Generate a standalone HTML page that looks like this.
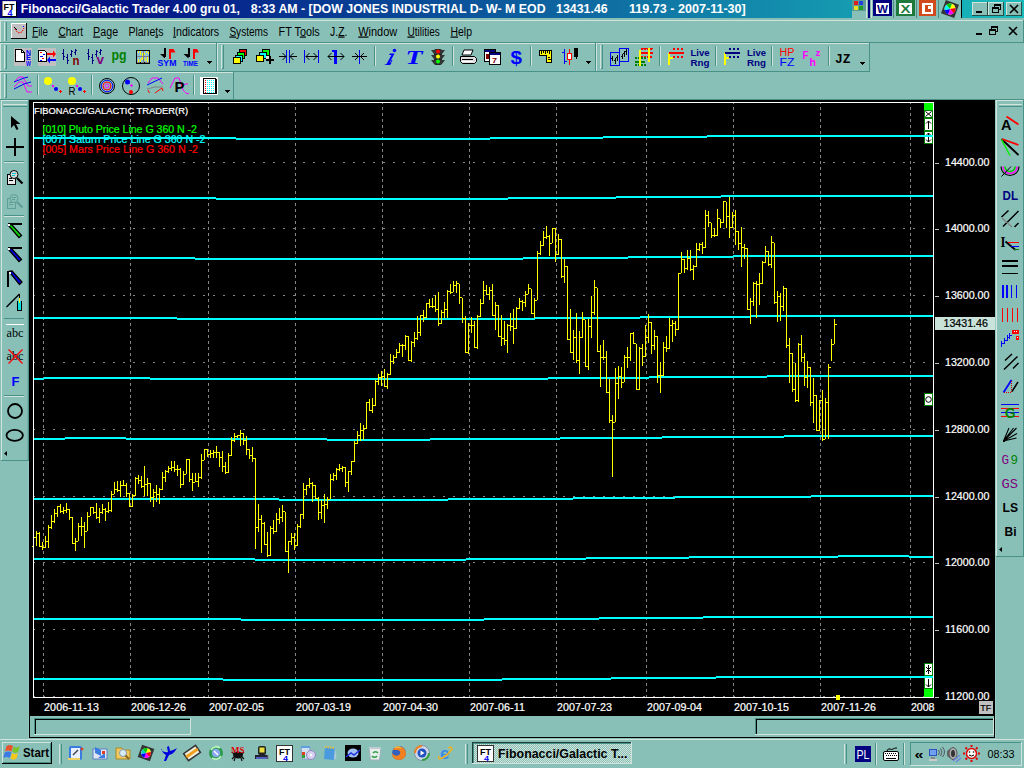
<!DOCTYPE html><html><head><meta charset="utf-8"><title>Fibonacci/Galactic Trader</title><style>
html,body{margin:0;padding:0}
body{width:1024px;height:768px;overflow:hidden;background:#88c0b8;position:relative;font-family:"Liberation Sans",sans-serif;font-size:12px;color:#000}
.abs{position:absolute}
svg{position:absolute;left:0;top:0;overflow:visible}
svg text{font-family:"Liberation Sans",sans-serif;white-space:pre}
</style></head><body>
<div id="titlebar" class="abs" style="left:0;top:0;width:1024px;height:18px;background:linear-gradient(90deg,#000080 0,#000080 18px,#19bbbb 1024px)"></div>
<svg width="1024" height="43" viewBox="0 0 1024 43" shape-rendering="crispEdges">
<rect x="2" y="1" width="14" height="15" fill="#fff" /><rect x="2" y="1" width="14" height="1" fill="#ddd" /><rect x="16" y="2" width="1" height="15" fill="#000" /><rect x="3" y="16" width="14" height="1" fill="#000" /><rect x="2" y="1" width="1" height="15" fill="#888" />
<text x="3.5" y="10" font-size="9.5" fill="#000" font-weight="bold" textLength="11" lengthAdjust="spacingAndGlyphs" shape-rendering="auto">FT</text>
<text x="7.5" y="16" font-size="8.5" fill="#0000ff" font-weight="bold" textLength="5" lengthAdjust="spacingAndGlyphs" >4</text>
<text x="20.8" y="13" font-size="12.6" fill="#fff" font-weight="bold" textLength="219.2" lengthAdjust="spacingAndGlyphs" >Fibonacci/Galactic Trader 4.00 gru 01,</text>
<text x="250.7" y="13" font-size="12.6" fill="#fff" font-weight="bold" textLength="294.9" lengthAdjust="spacingAndGlyphs" >8:33 AM - [DOW JONES INDUSTRIAL D- W- M EOD</text>
<text x="556" y="13" font-size="12.6" fill="#fff" font-weight="bold" textLength="51.7" lengthAdjust="spacingAndGlyphs" >13431.46</text>
<text x="629" y="13" font-size="12.6" fill="#fff" font-weight="bold" textLength="116.8" lengthAdjust="spacingAndGlyphs" >119.73 - 2007-11-30]</text>
<rect x="852" y="0" width="110" height="18" fill="#88c0b8" />
<rect x="852" y="0" width="14" height="11" fill="#5d9b94" />
<rect x="854" y="1" width="4" height="4" fill="#e02020" /><rect x="859" y="1" width="4" height="4" fill="#2040e0" /><rect x="854" y="6" width="4" height="4" fill="#e8e020" /><rect x="859" y="6" width="4" height="4" fill="#20a020" />
<rect x="866" y="0" width="1" height="18" fill="#d0e4dc" /><rect x="868" y="0" width="2" height="18" fill="#000080" /><rect x="871" y="0" width="1" height="18" fill="#d0e4dc" />
<rect x="873" y="0" width="19" height="16" fill="#000080" /><rect x="876" y="3" width="13" height="11" fill="#fff" /><text x="877" y="13" font-size="11" fill="#000080" font-weight="bold" textLength="11" lengthAdjust="spacingAndGlyphs" >W</text>
<rect x="893" y="0" width="1" height="18" fill="#489088" />
<rect x="896" y="0" width="19" height="16" fill="#1e7a3c" /><rect x="899" y="3" width="13" height="11" fill="#fff" /><text x="900.5" y="13" font-size="11" fill="#1e7a3c" font-weight="bold" textLength="10" lengthAdjust="spacingAndGlyphs" >X</text>
<rect x="916" y="0" width="1" height="18" fill="#489088" />
<rect x="919" y="0" width="17" height="16" fill="#d04a1c" /><rect x="922" y="3" width="11" height="11" fill="#fff" /><rect x="925" y="5" width="6" height="7" fill="#d04a1c" /><rect x="928" y="6" width="3" height="3" fill="#fff" />
<rect x="938" y="0" width="1" height="18" fill="#489088" />
<g transform="rotate(20 950 9)" shape-rendering="auto"><rect x="943" y="2" width="14" height="14" fill="#333"/><circle cx="950" cy="9" r="5.5" fill="#e8e8e8"/><path d="M950 9L950 3.5A5.5 5.5 0 0 1 954.8 6.2z" fill="#ff0"/><path d="M950 9L954.8 6.2A5.5 5.5 0 0 1 954.8 11.8z" fill="#f00"/><path d="M950 9L954.8 11.8A5.5 5.5 0 0 1 950 14.5z" fill="#f0f"/><path d="M950 9L950 14.5A5.5 5.5 0 0 1 945.2 11.8z" fill="#00f"/><path d="M950 9L945.2 11.8A5.5 5.5 0 0 1 945.2 6.2z" fill="#0ff"/><path d="M950 9L945.2 6.2A5.5 5.5 0 0 1 950 3.5z" fill="#0c0"/></g>
<rect x="961" y="0" width="1" height="18" fill="#000" />
<rect x="972" y="2" width="16" height="14" fill="#88c0b8" /><rect x="972" y="2" width="16" height="1" fill="#d0e4dc" /><rect x="972" y="2" width="1" height="14" fill="#d0e4dc" /><rect x="972" y="15" width="16" height="1" fill="#27504a" /><rect x="987" y="2" width="1" height="14" fill="#27504a" />
<rect x="988" y="2" width="16" height="14" fill="#88c0b8" /><rect x="988" y="2" width="16" height="1" fill="#d0e4dc" /><rect x="988" y="2" width="1" height="14" fill="#d0e4dc" /><rect x="988" y="15" width="16" height="1" fill="#27504a" /><rect x="1003" y="2" width="1" height="14" fill="#27504a" />
<rect x="1006" y="2" width="16" height="14" fill="#88c0b8" /><rect x="1006" y="2" width="16" height="1" fill="#d0e4dc" /><rect x="1006" y="2" width="1" height="14" fill="#d0e4dc" /><rect x="1006" y="15" width="16" height="1" fill="#27504a" /><rect x="1021" y="2" width="1" height="14" fill="#27504a" />
<rect x="976" y="11" width="6" height="2" fill="#000" />
<path d="M994.5 4.5h6v5h-6zM992.5 7.5h6v5h-6z" stroke="#000" fill="none"/><rect x="994" y="4" width="7" height="2" fill="#000" /><rect x="992" y="7" width="7" height="2" fill="#000" /><rect x="993" y="9" width="5" height="3" fill="#88c0b8" />
<path d="M1010 5l8 8M1018 5l-8 8" stroke="#000" stroke-width="1.6" shape-rendering="auto"/>
<rect x="0" y="20" width="1024" height="1" fill="#d0e4dc" /><rect x="0" y="20" width="1" height="80" fill="#d0e4dc" />
<rect x="0" y="42" width="1024" height="1" fill="#489088" /><rect x="1023" y="20" width="1" height="23" fill="#489088" />
<rect x="4" y="22" width="1" height="19" fill="#d0e4dc" /><rect x="5" y="22" width="1" height="19" fill="#88c0b8" /><rect x="6" y="22" width="1" height="19" fill="#489088" />
<rect x="11" y="23" width="16" height="16" fill="#c0c0c0" /><rect x="11" y="23" width="16" height="1" fill="#fff" /><rect x="11" y="23" width="1" height="16" fill="#fff" /><rect x="11" y="38" width="16" height="1" fill="#000" /><rect x="26" y="23" width="1" height="16" fill="#000" />
<path d="M14 27l3 3" stroke="#000" shape-rendering="auto"/><path d="M15 29l3 4l4-1l2-4" stroke="#e00" fill="none" stroke-dasharray="1.5 1" shape-rendering="auto"/><rect x="23" y="26" width="1" height="1" fill="#00f" />
<text x="32.2" y="35.5" font-size="12" textLength="15.8" lengthAdjust="spacingAndGlyphs" shape-rendering="auto"><tspan text-decoration="underline">F</tspan>ile</text>
<text x="58.4" y="35.5" font-size="12" textLength="24.7" lengthAdjust="spacingAndGlyphs" shape-rendering="auto"><tspan text-decoration="underline">C</tspan>hart</text>
<text x="93.1" y="35.5" font-size="12" textLength="25.0" lengthAdjust="spacingAndGlyphs" shape-rendering="auto"><tspan text-decoration="underline">P</tspan>age</text>
<text x="128.4" y="35.5" font-size="12" textLength="35.0" lengthAdjust="spacingAndGlyphs" shape-rendering="auto">Plane<tspan text-decoration="underline">t</tspan>s</text>
<text x="173.1" y="35.5" font-size="12" textLength="46.1" lengthAdjust="spacingAndGlyphs" shape-rendering="auto"><tspan text-decoration="underline">I</tspan>ndicators</text>
<text x="229.4" y="35.5" font-size="12" textLength="38.6" lengthAdjust="spacingAndGlyphs" shape-rendering="auto"><tspan text-decoration="underline">S</tspan>ystems</text>
<text x="278.6" y="35.5" font-size="12" textLength="41.2" lengthAdjust="spacingAndGlyphs" shape-rendering="auto">FT T<tspan text-decoration="underline">o</tspan>ols</text>
<text x="330.1" y="35.5" font-size="12" textLength="17.4" lengthAdjust="spacingAndGlyphs" shape-rendering="auto">J.<tspan text-decoration="underline">Z</tspan>.</text>
<text x="358.2" y="35.5" font-size="12" textLength="39.0" lengthAdjust="spacingAndGlyphs" shape-rendering="auto"><tspan text-decoration="underline">W</tspan>indow</text>
<text x="407.4" y="35.5" font-size="12" textLength="32.4" lengthAdjust="spacingAndGlyphs" shape-rendering="auto"><tspan text-decoration="underline">U</tspan>tilities</text>
<text x="450.5" y="35.5" font-size="12" textLength="21.5" lengthAdjust="spacingAndGlyphs" shape-rendering="auto"><tspan text-decoration="underline">H</tspan>elp</text>
<rect x="976" y="33" width="6" height="2" fill="#000" />
<path d="M991.5 26.5h6v5h-6zM989.5 29.5h6v5h-6z" stroke="#000" fill="none"/><rect x="991" y="26" width="7" height="2" fill="#000" /><rect x="989" y="29" width="7" height="2" fill="#000" /><rect x="990" y="31" width="5" height="3" fill="#88c0b8" />
<path d="M1009 27l8 8M1017 27l-8 8" stroke="#000" stroke-width="1.6" shape-rendering="auto"/>
</svg>
<svg width="1024" height="100" viewBox="0 0 1024 100" shape-rendering="crispEdges">
<rect x="0" y="43" width="217" height="1" fill="#d0e4dc" /><rect x="0" y="43" width="1" height="29" fill="#d0e4dc" /><rect x="0" y="71" width="217" height="1" fill="#489088" /><rect x="216" y="43" width="1" height="29" fill="#489088" /><rect x="217" y="43" width="379" height="1" fill="#d0e4dc" /><rect x="217" y="43" width="1" height="29" fill="#d0e4dc" /><rect x="217" y="71" width="379" height="1" fill="#489088" /><rect x="595" y="43" width="1" height="29" fill="#489088" /><rect x="596" y="43" width="274" height="1" fill="#d0e4dc" /><rect x="596" y="43" width="1" height="29" fill="#d0e4dc" /><rect x="596" y="71" width="274" height="1" fill="#489088" /><rect x="869" y="43" width="1" height="29" fill="#489088" /><rect x="0" y="72" width="234" height="1" fill="#d0e4dc" /><rect x="0" y="72" width="1" height="28" fill="#d0e4dc" /><rect x="0" y="99" width="234" height="1" fill="#489088" /><rect x="233" y="72" width="1" height="28" fill="#489088" />
<rect x="234" y="99" width="790" height="1" fill="#489088" />
<rect x="4" y="45" width="1" height="24" fill="#d0e4dc" /><rect x="5" y="45" width="1" height="24" fill="#88c0b8" /><rect x="6" y="45" width="1" height="24" fill="#489088" /><rect x="5" y="68" width="1" height="1" fill="#489088" />
<rect x="221" y="45" width="1" height="24" fill="#d0e4dc" /><rect x="222" y="45" width="1" height="24" fill="#88c0b8" /><rect x="223" y="45" width="1" height="24" fill="#489088" /><rect x="222" y="68" width="1" height="1" fill="#489088" />
<rect x="600" y="45" width="1" height="24" fill="#d0e4dc" /><rect x="601" y="45" width="1" height="24" fill="#88c0b8" /><rect x="602" y="45" width="1" height="24" fill="#489088" /><rect x="601" y="68" width="1" height="1" fill="#489088" />
<rect x="4" y="74" width="1" height="24" fill="#d0e4dc" /><rect x="5" y="74" width="1" height="24" fill="#88c0b8" /><rect x="6" y="74" width="1" height="24" fill="#489088" /><rect x="5" y="97" width="1" height="1" fill="#489088" />
<rect x="14" y="48" width="18" height="18" fill="#c0c0c0" />
<path d="M15.5 49.5h6l3 3v9h-9z" fill="#fff" stroke="#000"/><path d="M21.5 49.5v3h3" fill="none" stroke="#000"/>
<text x="26" y="54.5" font-size="6.5" fill="#0000ff" font-weight="bold" textLength="5" lengthAdjust="spacingAndGlyphs" >N</text>
<text x="26" y="60.0" font-size="6.5" fill="#0000ff" font-weight="bold" textLength="5" lengthAdjust="spacingAndGlyphs" >E</text>
<text x="26" y="65.5" font-size="6.5" fill="#0000ff" font-weight="bold" textLength="5" lengthAdjust="spacingAndGlyphs" >W</text>
<rect x="38" y="48" width="18" height="18" fill="#c0c0c0" />
<path d="M38.5 50.5h6l2 2v9h-8z" fill="#fff" stroke="#000"/><rect x="40" y="52" width="2" height="1" fill="#f00" /><rect x="43" y="54" width="2" height="1" fill="#00f" /><rect x="40" y="56" width="3" height="1" fill="#00f" /><rect x="42" y="58" width="2" height="1" fill="#f00" /><rect x="40" y="60" width="2" height="1" fill="#00f" />
<path d="M47 53h6v-2.5l3 3.5l-3 3.5v-2.5h-6z" fill="#f00" shape-rendering="auto"/><path d="M56 59h-6v-2.5l-3 3.5l3 3.5v-2.5h6z" fill="#00f" shape-rendering="auto"/>
<rect x="63" y="49" width="1" height="11" fill="#000080" /><rect x="62" y="53" width="1" height="1" fill="#000080" /><rect x="64" y="56" width="1" height="1" fill="#000080" /><rect x="67" y="54" width="1" height="10" fill="#000080" /><rect x="66" y="57" width="1" height="1" fill="#000080" /><rect x="68" y="60" width="1" height="1" fill="#000080" /><rect x="71" y="50" width="1" height="7" fill="#000080" /><rect x="72" y="51" width="1" height="1" fill="#000080" /><rect x="70" y="54" width="1" height="1" fill="#000080" /><rect x="75" y="49" width="1" height="6" fill="#000080" /><rect x="76" y="50" width="1" height="1" fill="#000080" /><rect x="74" y="52" width="1" height="1" fill="#000080" /><text x="72.5" y="65" font-size="13" fill="#800000" font-weight="bold" textLength="7" lengthAdjust="spacingAndGlyphs" shape-rendering="auto">n</text>
<rect x="88" y="49" width="1" height="11" fill="#000080" /><rect x="87" y="53" width="1" height="1" fill="#000080" /><rect x="89" y="56" width="1" height="1" fill="#000080" /><rect x="92" y="54" width="1" height="10" fill="#000080" /><rect x="91" y="57" width="1" height="1" fill="#000080" /><rect x="93" y="60" width="1" height="1" fill="#000080" /><rect x="96" y="50" width="1" height="7" fill="#000080" /><rect x="97" y="51" width="1" height="1" fill="#000080" /><rect x="95" y="54" width="1" height="1" fill="#000080" /><rect x="100" y="49" width="1" height="6" fill="#000080" /><rect x="101" y="50" width="1" height="1" fill="#000080" /><rect x="99" y="52" width="1" height="1" fill="#000080" /><text x="96.5" y="64" font-size="13" fill="#800080" font-weight="bold" textLength="7.5" lengthAdjust="spacingAndGlyphs" shape-rendering="auto">v</text>
<text x="111.5" y="60" font-size="14" fill="#008000" font-weight="bold" textLength="15" lengthAdjust="spacingAndGlyphs" shape-rendering="auto">pg</text>
<rect x="136" y="50" width="14" height="14" fill="#000" /><rect x="137" y="51" width="12" height="12" fill="#8cc0d8" /><rect x="143" y="51" width="1" height="12" fill="#808080" /><rect x="137" y="56" width="12" height="1" fill="#808080" /><rect x="137" y="62" width="12" height="1" fill="#808080" /><rect x="140" y="62" width="1" height="1" fill="#000" /><rect x="144" y="62" width="1" height="1" fill="#000" />
<rect x="138" y="51" width="1" height="2" fill="#ffff00" />
<rect x="140" y="51" width="1" height="4" fill="#ffff00" />
<rect x="142" y="53" width="1" height="3" fill="#ffff00" />
<rect x="144" y="53" width="1" height="2" fill="#ffff00" />
<rect x="146" y="51" width="1" height="2" fill="#ffff00" />
<rect x="148" y="52" width="1" height="2" fill="#ffff00" />
<rect x="138" y="59" width="1" height="3" fill="#ffff00" />
<rect x="140" y="59" width="1" height="3" fill="#ffff00" />
<rect x="141" y="58" width="1" height="1" fill="#ffff00" />
<rect x="142" y="57" width="1" height="3" fill="#ffff00" />
<rect x="145" y="58" width="1" height="3" fill="#ffff00" />
<rect x="147" y="57" width="1" height="5" fill="#ffff00" />
<rect x="164" y="48" width="2" height="9" fill="#000" /><path d="M160 54l5 4.5V54z" fill="#000" shape-rendering="auto"/><rect x="169" y="49" width="2" height="10" fill="#f00" /><path d="M171 49h2.5l2 3.5h-4.5z" fill="#f00" shape-rendering="auto"/><text x="157.5" y="65.5" font-size="8.5" fill="#0000ff" font-weight="bold" textLength="19" lengthAdjust="spacingAndGlyphs" shape-rendering="auto">SYM</text>
<rect x="187.5" y="48" width="2" height="9" fill="#000" /><path d="M183.5 54l5 4.5V54z" fill="#000" shape-rendering="auto"/><rect x="192.5" y="49" width="2" height="10" fill="#f00" /><path d="M194.5 49h2.5l2 3.5h-4.5z" fill="#f00" shape-rendering="auto"/><text x="183" y="65.5" font-size="7.5" fill="#0000ff" font-weight="bold" textLength="15" lengthAdjust="spacingAndGlyphs" shape-rendering="auto">TIME</text>
<path d="M207 61h5l-2.5 3z" fill="#000"/>
<rect x="239" y="49" width="8" height="7" fill="#f00" /><path d="M239.5 49.5h7v6h-7z" fill="none" stroke="#000"/><rect x="237" y="52" width="8" height="7" fill="#0f0" /><path d="M237.5 52.5h7v6h-7z" fill="none" stroke="#000"/><rect x="235" y="55" width="8" height="7" fill="#0ff" /><path d="M235.5 55.5h7v6h-7z" fill="none" stroke="#000"/><rect x="233" y="57" width="8" height="7" fill="#ff0" /><path d="M233.5 57.5h7v6h-7z" fill="none" stroke="#000"/>
<rect x="262" y="49" width="8" height="7" fill="#0f0" /><path d="M262.5 49.5h7v6h-7z" fill="none" stroke="#000"/><rect x="259" y="52" width="8" height="7" fill="#0ff" /><path d="M259.5 52.5h7v6h-7z" fill="none" stroke="#000"/><rect x="256" y="55" width="8" height="7" fill="#ff0" /><path d="M256.5 55.5h7v6h-7z" fill="none" stroke="#000"/><rect x="266" y="56" width="3" height="3" fill="#ddd" /><rect x="269" y="56" width="2" height="8" fill="#000" /><rect x="266" y="59" width="8" height="2" fill="#000" />
<rect x="286" y="50" width="1" height="13" fill="#00f" /><rect x="289" y="50" width="1" height="13" fill="#00f" /><rect x="279" y="56" width="7" height="1" fill="#000" /><rect x="290" y="56" width="7" height="1" fill="#000" /><path d="M282.5 53l3.5 3.5l-3.5 3.5M293.5 53l-3.5 3.5l3.5 3.5" fill="none" stroke="#000" shape-rendering="auto"/>
<rect x="304" y="50" width="1" height="13" fill="#00f" /><rect x="318" y="50" width="1" height="13" fill="#00f" /><rect x="306" y="56" width="12" height="1" fill="#000" /><path d="M309.5 53l-3.5 3.5l3.5 3.5M313.5 53l3.5 3.5l-3.5 3.5" fill="none" stroke="#000" shape-rendering="auto"/>
<rect x="334" y="50" width="3" height="14" fill="#00f" /><rect x="332" y="50" width="2" height="2" fill="#00f" /><rect x="328" y="56" width="16" height="1" fill="#000" /><path d="M331.5 53l-3.5 3.5l3.5 3.5M340.5 53l3.5 3.5l-3.5 3.5" fill="none" stroke="#000" shape-rendering="auto"/>
<rect x="359" y="50" width="1" height="14" fill="#00f" /><rect x="352" y="56" width="15" height="1" fill="#000" /><path d="M355 53l3.5 3.5l-3.5 3.5M364 53l-3.5 3.5l3.5 3.5" fill="none" stroke="#000" shape-rendering="auto"/>
<rect x="374" y="46" width="1" height="20" fill="#489088" /><rect x="375" y="46" width="1" height="20" fill="#d0e4dc" />
<path d="M384 65l2.5-1l5-9h-2.5l1-1.5h4.5l-5 9.5h2l-1.5 2z" fill="#00f" shape-rendering="auto"/><path d="M392 60l-2 4" stroke="#00f" shape-rendering="auto"/><circle cx="394.5" cy="50.5" r="1.8" fill="#00f" shape-rendering="auto"/>
<text x="405.5" y="64" font-size="19" fill="#0000ff" font-weight="bold" textLength="17" lengthAdjust="spacingAndGlyphs" style="font-style:italic;font-family:'Liberation Serif',serif" shape-rendering="auto">T</text>
<rect x="434" y="49" width="8" height="16" rx="2" fill="#222" shape-rendering="auto"/><path d="M431 50h14l-3 4h-8zM431 55h14l-3 4h-8zM431 60h14l-3 4h-8z" fill="#333" shape-rendering="auto"/><circle cx="438" cy="51.5" r="2" fill="#f00" shape-rendering="auto"/><circle cx="438" cy="56.5" r="2" fill="#ff0" shape-rendering="auto"/><circle cx="438" cy="61.5" r="2" fill="#0f0" shape-rendering="auto"/>
<rect x="452" y="46" width="1" height="20" fill="#489088" /><rect x="453" y="46" width="1" height="20" fill="#d0e4dc" />
<path d="M464 50h9l-2 5h-9z" fill="#fff" stroke="#000" shape-rendering="auto"/><path d="M460.5 56.500h14l2 2v3l-2 2h-12l-2-2z" fill="#ddd" stroke="#000" shape-rendering="auto"/><rect x="462" y="59" width="11" height="1" fill="#000" /><rect x="462" y="61" width="11" height="1" fill="#fff" />
<rect x="484" y="50" width="11" height="12" fill="#fff" /><path d="M484.500 49.500h11v12h-11z" fill="none" stroke="#000"/><rect x="485" y="50" width="10" height="2" fill="#000080" /><rect x="486" y="54" width="3" height="5" fill="#800000" />
<rect x="489" y="53" width="11" height="12" fill="#fff" /><path d="M489.500 52.500h11v12h-11z" fill="none" stroke="#000"/><rect x="490" y="53" width="10" height="2" fill="#000080" /><text x="492" y="63" font-size="8" fill="#800000" font-weight="bold" textLength="5" lengthAdjust="spacingAndGlyphs" >7</text>
<text x="510.5" y="64" font-size="18" fill="#0000ff" font-weight="bold" textLength="11.5" lengthAdjust="spacingAndGlyphs" shape-rendering="auto">$</text>
<rect x="530" y="46" width="1" height="20" fill="#489088" /><rect x="531" y="46" width="1" height="20" fill="#d0e4dc" />
<path d="M539.500 50.500h12v12h-5v-7h-7z" fill="#ffff00" stroke="#000"/><rect x="541" y="51" width="1" height="3" fill="#000" /><rect x="543" y="51" width="1" height="2" fill="#000" /><rect x="545" y="51" width="1" height="3" fill="#000" /><rect x="547" y="51" width="1" height="2" fill="#000" /><rect x="549" y="51" width="1" height="3" fill="#000" /><rect x="548" y="57" width="2" height="1" fill="#000" /><rect x="548" y="59" width="3" height="1" fill="#000" />
<rect x="564" y="49" width="1" height="15" fill="#00f" /><rect x="562" y="52" width="2" height="1" fill="#00f" /><rect x="565" y="61" width="2" height="1" fill="#00f" /><rect x="569" y="49" width="1" height="16" fill="#f00" /><path d="M567.500 53.500h4v6h-4z" fill="#fff" stroke="#f00"/><rect x="574" y="48" width="4" height="9" fill="#000" /><rect x="576" y="57" width="1" height="2" fill="#000" />
<path d="M586 61h5l-2.5 3z" fill="#000"/>
<path d="M610.500 52.500h9v13h-9zM619.500 48.500h9v13h-9z" fill="none" stroke="#00f"/><rect x="619" y="52" width="1" height="10" fill="#00f" />
<rect x="612" y="56" width="1" height="5" fill="#000" /><rect x="611" y="58" width="1" height="1" fill="#000" />
<rect x="615" y="58" width="1" height="6" fill="#000" /><rect x="614" y="60" width="1" height="1" fill="#000" />
<rect x="617" y="55" width="1" height="6" fill="#000" /><rect x="616" y="57" width="1" height="1" fill="#000" />
<rect x="622" y="54" width="1" height="5" fill="#000" /><rect x="621" y="56" width="1" height="1" fill="#000" />
<rect x="624" y="51" width="1" height="6" fill="#000" /><rect x="623" y="53" width="1" height="1" fill="#000" />
<rect x="626" y="49" width="1" height="6" fill="#000" /><rect x="625" y="51" width="1" height="1" fill="#000" />
<rect x="641" y="48" width="12" height="1" fill="#f00" stroke-dasharray="2"/><rect x="642" y="52" width="11" height="2" fill="#f00" /><rect x="635" y="61" width="10" height="2" fill="#008000" /><rect x="639" y="50" width="2" height="16" fill="#ff0" /><rect x="648" y="48" width="2" height="14" fill="#ff0" />
<rect x="641" y="48" width="2" height="2" fill="#f00" /><rect x="641" y="56" width="2" height="2" fill="#f00" /><rect x="635" y="57" width="2" height="2" fill="#008000" /><rect x="635" y="64" width="2" height="2" fill="#008000" />
<rect x="644" y="48" width="2" height="2" fill="#f00" /><rect x="644" y="56" width="2" height="2" fill="#f00" /><rect x="638" y="57" width="2" height="2" fill="#008000" /><rect x="638" y="64" width="2" height="2" fill="#008000" />
<rect x="647" y="48" width="2" height="2" fill="#f00" /><rect x="647" y="56" width="2" height="2" fill="#f00" /><rect x="641" y="57" width="2" height="2" fill="#008000" /><rect x="641" y="64" width="2" height="2" fill="#008000" />
<rect x="650" y="48" width="2" height="2" fill="#f00" /><rect x="650" y="56" width="2" height="2" fill="#f00" /><rect x="644" y="57" width="2" height="2" fill="#008000" /><rect x="644" y="64" width="2" height="2" fill="#008000" />
<rect x="641" y="52" width="12" height="2" fill="#f00" /><rect x="635" y="61" width="10" height="2" fill="#008000" /><rect x="639" y="52" width="2" height="14" fill="#ff0" /><rect x="648" y="48" width="2" height="14" fill="#ff0" />
<rect x="659" y="46" width="1" height="20" fill="#489088" /><rect x="660" y="46" width="1" height="20" fill="#d0e4dc" />
<rect x="668" y="53" width="2" height="12" fill="#ff0" /><rect x="670" y="57" width="3" height="2" fill="#ff0" /><rect x="669" y="52" width="15" height="2" fill="#f00" /><rect x="673" y="48" width="2" height="2" fill="#f00" /><rect x="673" y="56" width="2" height="2" fill="#f00" /><rect x="677" y="48" width="2" height="2" fill="#f00" /><rect x="677" y="56" width="2" height="2" fill="#f00" /><rect x="681" y="48" width="2" height="2" fill="#f00" /><rect x="681" y="56" width="2" height="2" fill="#f00" /><text x="690.5" y="55.5" font-size="8.5" fill="#000080" font-weight="bold" textLength="19" lengthAdjust="spacingAndGlyphs" shape-rendering="auto">Live</text><text x="690.5" y="65.5" font-size="8.5" fill="#000080" font-weight="bold" textLength="19" lengthAdjust="spacingAndGlyphs" shape-rendering="auto">Rng</text>
<rect x="715" y="46" width="1" height="20" fill="#489088" /><rect x="716" y="46" width="1" height="20" fill="#d0e4dc" />
<rect x="724" y="53" width="2" height="12" fill="#ff0" /><rect x="726" y="57" width="3" height="2" fill="#ff0" /><rect x="725" y="52" width="15" height="2" fill="#000080" /><rect x="729" y="48" width="2" height="2" fill="#000080" /><rect x="729" y="56" width="2" height="2" fill="#000080" /><rect x="733" y="48" width="2" height="2" fill="#000080" /><rect x="733" y="56" width="2" height="2" fill="#000080" /><rect x="737" y="48" width="2" height="2" fill="#000080" /><rect x="737" y="56" width="2" height="2" fill="#000080" /><text x="747" y="55.5" font-size="8.5" fill="#000080" font-weight="bold" textLength="19" lengthAdjust="spacingAndGlyphs" shape-rendering="auto">Live</text><text x="747" y="65.5" font-size="8.5" fill="#000080" font-weight="bold" textLength="19" lengthAdjust="spacingAndGlyphs" shape-rendering="auto">Rng</text>
<rect x="771" y="46" width="1" height="20" fill="#489088" /><rect x="772" y="46" width="1" height="20" fill="#d0e4dc" />
<text x="779.5" y="56" font-size="10" fill="#ff0000" textLength="15" lengthAdjust="spacingAndGlyphs" shape-rendering="auto">HP</text><text x="779.5" y="66" font-size="11" fill="#0000ff" textLength="15" lengthAdjust="spacingAndGlyphs" shape-rendering="auto">FZ</text>
<text x="802.5" y="58.5" font-size="10.5" fill="#ff00ff" font-weight="bold" textLength="6" lengthAdjust="spacingAndGlyphs" shape-rendering="auto">F</text><text x="809.5" y="66" font-size="11.5" fill="#ff00ff" font-weight="bold" textLength="6.5" lengthAdjust="spacingAndGlyphs" shape-rendering="auto">h</text><text x="815.5" y="55.5" font-size="9" fill="#ff00ff" font-weight="bold" textLength="5" lengthAdjust="spacingAndGlyphs" shape-rendering="auto">z</text>
<rect x="828" y="46" width="1" height="20" fill="#489088" /><rect x="829" y="46" width="1" height="20" fill="#d0e4dc" />
<text x="835" y="63" font-size="13.5" fill="#000" font-weight="bold" textLength="15.5" lengthAdjust="spacingAndGlyphs" style="font-family:'Liberation Mono',monospace" shape-rendering="auto">JZ</text>
<path d="M860 62h5l-2.5 3z" fill="#000"/>
<path d="M14 82l5-5h4l5 9l4 0" fill="none" stroke="#f0f" shape-rendering="auto"/><path d="M14 87l5-5h4l4 10h5" fill="none" stroke="#f0f" shape-rendering="auto"/><path d="M14 82l10-4l4-1M14 89l10-5l7-2" fill="none" stroke="#00f" shape-rendering="auto"/>
<rect x="37" y="75" width="1" height="20" fill="#489088" /><rect x="38" y="75" width="1" height="20" fill="#d0e4dc" />
<circle cx="48" cy="81" r="4" fill="#ff0" shape-rendering="auto"/><rect x="52" y="85" width="2" height="2" fill="#f0f" /><circle cx="56" cy="89" r="2" fill="#00f" shape-rendering="auto"/><rect x="59" y="91" width="3" height="1" fill="#f00" /><rect x="60" y="90" width="1" height="3" fill="#f00" />
<circle cx="72" cy="81" r="4" fill="#ff0" shape-rendering="auto"/><text x="68.5" y="94.5" font-size="10" fill="#000" textLength="7" lengthAdjust="spacingAndGlyphs" shape-rendering="auto">R</text><rect x="76" y="85" width="2" height="2" fill="#f0f" /><circle cx="80" cy="89" r="2" fill="#00f" shape-rendering="auto"/><rect x="83" y="91" width="3" height="1" fill="#f00" /><rect x="84" y="90" width="1" height="3" fill="#f00" />
<rect x="91" y="75" width="1" height="20" fill="#489088" /><rect x="92" y="75" width="1" height="20" fill="#d0e4dc" />
<circle cx="107" cy="86" r="7.5" fill="none" stroke="#000" shape-rendering="auto"/><circle cx="107" cy="86" r="5.8" fill="none" stroke="#00f" shape-rendering="auto"/><circle cx="107" cy="86" r="4" fill="none" stroke="#f00" shape-rendering="auto"/><circle cx="107" cy="86" r="2" fill="none" stroke="#f0f" shape-rendering="auto"/>
<circle cx="131" cy="86" r="8.5" fill="none" stroke="#000" shape-rendering="auto"/><circle cx="127.500" cy="82" r="2.5" fill="#00f" shape-rendering="auto"/><circle cx="131" cy="92" r="2" fill="#f00" shape-rendering="auto"/><rect x="130" y="85" width="3" height="1" fill="#f0f" /><rect x="131" y="84" width="1" height="3" fill="#f0f" />
<path d="M148 83l4-5l6 0l5 6" fill="none" stroke="#f0f" shape-rendering="auto"/><path d="M147 85l15-7" fill="none" stroke="#00f" shape-rendering="auto"/><path d="M147 89l8-2l8 0" fill="none" stroke="#808080" shape-rendering="auto"/><path d="M148 90l1.500 3M155 93l7-5l1 3" fill="none" stroke="#f00" shape-rendering="auto"/>
<path d="M170 88l5-10l4 0l4 12l4 4l2-1M178 88l4-1l3-3l3 0" fill="none" stroke="#f0f" shape-rendering="auto"/><text x="174.5" y="92" font-size="15" fill="#000" font-weight="bold" textLength="10" lengthAdjust="spacingAndGlyphs" shape-rendering="auto">P</text>
<rect x="193" y="75" width="1" height="20" fill="#489088" /><rect x="194" y="75" width="1" height="20" fill="#d0e4dc" />
<rect x="200" y="77" width="18" height="18" fill="#fff" /><path d="M203.500 78.500h12v15h-12z" fill="#fff" stroke="#000"/><rect x="204" y="93" width="13" height="1" fill="#000" /><rect x="215" y="79" width="2" height="15" fill="#000" />
<rect x="203" y="80" width="1" height="1" fill="#000" /><rect x="205" y="80" width="1" height="1" fill="#f00" />
<rect x="207" y="80" width="1" height="1" fill="#0ff" />
<rect x="209" y="80" width="1" height="1" fill="#0ff" />
<rect x="211" y="80" width="1" height="1" fill="#0ff" />
<rect x="213" y="80" width="1" height="1" fill="#0ff" />
<rect x="203" y="82" width="1" height="1" fill="#000" /><rect x="205" y="82" width="1" height="1" fill="#f00" />
<rect x="207" y="82" width="1" height="1" fill="#0ff" />
<rect x="209" y="82" width="1" height="1" fill="#0ff" />
<rect x="211" y="82" width="1" height="1" fill="#0ff" />
<rect x="213" y="82" width="1" height="1" fill="#0ff" />
<rect x="203" y="84" width="1" height="1" fill="#000" /><rect x="205" y="84" width="1" height="1" fill="#f00" />
<rect x="207" y="84" width="1" height="1" fill="#0ff" />
<rect x="209" y="84" width="1" height="1" fill="#0ff" />
<rect x="211" y="84" width="1" height="1" fill="#0ff" />
<rect x="213" y="84" width="1" height="1" fill="#0ff" />
<rect x="203" y="86" width="1" height="1" fill="#000" /><rect x="205" y="86" width="1" height="1" fill="#f00" />
<rect x="207" y="86" width="1" height="1" fill="#0ff" />
<rect x="209" y="86" width="1" height="1" fill="#0ff" />
<rect x="211" y="86" width="1" height="1" fill="#0ff" />
<rect x="213" y="86" width="1" height="1" fill="#0ff" />
<rect x="203" y="88" width="1" height="1" fill="#000" /><rect x="205" y="88" width="1" height="1" fill="#f00" />
<rect x="207" y="88" width="1" height="1" fill="#0ff" />
<rect x="209" y="88" width="1" height="1" fill="#0ff" />
<rect x="211" y="88" width="1" height="1" fill="#0ff" />
<rect x="213" y="88" width="1" height="1" fill="#0ff" />
<rect x="203" y="90" width="1" height="1" fill="#000" /><rect x="205" y="90" width="1" height="1" fill="#f00" />
<rect x="207" y="90" width="1" height="1" fill="#0ff" />
<rect x="209" y="90" width="1" height="1" fill="#0ff" />
<rect x="211" y="90" width="1" height="1" fill="#0ff" />
<rect x="213" y="90" width="1" height="1" fill="#0ff" />
<rect x="203" y="92" width="1" height="1" fill="#000" /><rect x="205" y="92" width="1" height="1" fill="#f00" />
<rect x="207" y="92" width="1" height="1" fill="#0ff" />
<rect x="209" y="92" width="1" height="1" fill="#0ff" />
<rect x="211" y="92" width="1" height="1" fill="#0ff" />
<rect x="213" y="92" width="1" height="1" fill="#0ff" />
<path d="M225 90h5l-2.5 3z" fill="#000"/>
</svg>
<svg width="1024" height="768" viewBox="0 0 1024 768" shape-rendering="crispEdges">
<rect x="1" y="100" width="28" height="1" fill="#d0e4dc" /><rect x="1" y="100" width="1" height="360" fill="#d0e4dc" /><rect x="27" y="101" width="1" height="359" fill="#78b0a8" /><rect x="28" y="99" width="1" height="362" fill="#489088" /><rect x="28" y="461" width="1" height="278" fill="#94c8c0" /><rect x="1" y="460" width="28" height="1" fill="#489088" />
<rect x="3" y="104" width="24" height="1" fill="#d0e4dc" /><rect x="3" y="105" width="24" height="1" fill="#88c0b8" /><rect x="3" y="106" width="24" height="1" fill="#489088" />
<path d="M11 116v12l3-3l2.500 5l2-1l-2.500-5h4.500z" fill="#000" shape-rendering="auto"/>
<rect x="6" y="146" width="18" height="2" fill="#000" /><rect x="14" y="138" width="2" height="18" fill="#000" />
<rect x="4" y="161" width="20" height="1" fill="#489088" /><rect x="4" y="162" width="20" height="1" fill="#d0e4dc" />
<path d="M7.500 174.5h6l2 2v8h-8z" fill="#e8e8e8" stroke="#000"/><rect x="9" y="178" width="3" height="1" fill="#000" /><rect x="9" y="180" width="4" height="1" fill="#000" /><circle cx="14" cy="174.5" r="4" fill="#d8d8d8" stroke="#000" shape-rendering="auto"/><rect x="12" y="173" width="4" height="1" fill="#00c8c8" /><rect x="12" y="175" width="3" height="1" fill="#00c8c8" /><path d="M17 178l5.500 5.500" stroke="#000" stroke-width="2.200" shape-rendering="auto"/>
<path d="M7.500 198.5h6l2 2v8h-8z" fill="#88c0b8" stroke="#5f9f97"/><rect x="9" y="202" width="3" height="1" fill="#5f9f97" /><rect x="9" y="204" width="4" height="1" fill="#5f9f97" /><circle cx="14" cy="198.5" r="4" fill="#88c0b8" stroke="#5f9f97" shape-rendering="auto"/><rect x="12" y="197" width="4" height="1" fill="#5f9f97" /><rect x="12" y="199" width="3" height="1" fill="#5f9f97" /><path d="M17 202l5.500 5.500" stroke="#5f9f97" stroke-width="2.200" shape-rendering="auto"/>
<rect x="4" y="215" width="20" height="1" fill="#489088" /><rect x="4" y="216" width="20" height="1" fill="#d0e4dc" />
<rect x="8" y="223" width="14" height="2" fill="#000" /><path d="M8.500 225.5l3-1l10 11l-2.500 2z" fill="#00e000" stroke="#000" stroke-width="1.300" shape-rendering="auto"/><rect x="8" y="224" width="2" height="2" fill="#fff" />
<rect x="8" y="247" width="14" height="2" fill="#000" /><path d="M8.500 249.5l3-1l10 11l-2.500 2z" fill="#0000e0" stroke="#000" stroke-width="1.300" shape-rendering="auto"/><rect x="8" y="248" width="2" height="2" fill="#fff" />
<rect x="7" y="271" width="2" height="16" fill="#000" /><path d="M9 271.500l3-.500l10 11l-2.500 2.500z" fill="#0000e0" stroke="#000" stroke-width="1.300" shape-rendering="auto"/><rect x="9" y="272" width="2" height="2" fill="#fff" />
<path d="M6.500 307l13-13" stroke="#000" stroke-width="1.500" shape-rendering="auto"/><rect x="19" y="294" width="1" height="7" fill="#000" /><rect x="17" y="301" width="5" height="10" fill="#00e0e0" /><rect x="17" y="301" width="1" height="10" fill="#000" /><rect x="21" y="301" width="1" height="10" fill="#000" /><rect x="17" y="310" width="5" height="1" fill="#000" /><rect x="19" y="298" width="1" height="5" fill="#ff0" />
<rect x="4" y="318" width="20" height="1" fill="#489088" /><rect x="6" y="324" width="18" height="1" fill="#fff" />
<text x="6.5" y="336.5" font-size="13" fill="#000" textLength="17" lengthAdjust="spacingAndGlyphs" style="font-family:'Liberation Serif',serif" shape-rendering="auto">abc</text>
<text x="6.5" y="360" font-size="13" fill="#000" textLength="17" lengthAdjust="spacingAndGlyphs" style="font-family:'Liberation Serif',serif" shape-rendering="auto">abc</text><path d="M8.500 349.500l14 14M22.500 349.500l-14 14" stroke="#f00" stroke-width="1.300" shape-rendering="auto"/>
<text x="11.5" y="386" font-size="13.5" fill="#0000ff" font-weight="bold" textLength="8" lengthAdjust="spacingAndGlyphs" shape-rendering="auto">F</text>
<rect x="4" y="395" width="20" height="1" fill="#489088" /><rect x="4" y="396" width="20" height="1" fill="#d0e4dc" />
<circle cx="15" cy="411" r="7" fill="none" stroke="#000" stroke-width="1.800" shape-rendering="auto"/><ellipse cx="14.700" cy="435.300" rx="8.200" ry="5.500" fill="none" stroke="#000" stroke-width="1.800" shape-rendering="auto"/>
<path d="M7 451v5l-3-2.500z" fill="#000" shape-rendering="auto"/>
<rect x="995" y="100" width="1" height="640" fill="#98ccc4" /><rect x="996" y="100" width="28" height="1" fill="#d0e4dc" /><rect x="996" y="100" width="1" height="456" fill="#d0e4dc" /><rect x="1023" y="100" width="1" height="457" fill="#489088" /><rect x="996" y="556" width="28" height="1" fill="#489088" />
<rect x="999" y="104" width="23" height="1" fill="#d0e4dc" /><rect x="999" y="105" width="23" height="1" fill="#88c0b8" /><rect x="999" y="106" width="23" height="1" fill="#489088" />
<text x="1001" y="130" font-size="15" fill="#000" font-weight="bold" textLength="10.5" lengthAdjust="spacingAndGlyphs" shape-rendering="auto">A</text><path d="M1006.500 116.500l12 8" stroke="#f00" stroke-width="1.800" shape-rendering="auto"/>
<path d="M1001.500 139l17 16" stroke="#000" stroke-width="1.800" shape-rendering="auto"/><path d="M1002 139l16.500 6" stroke="#f00" stroke-width="1.800" shape-rendering="auto"/><path d="M1001.500 139.500l8.500 16" stroke="#0e0" stroke-width="1.500" shape-rendering="auto"/>
<path d="M1001 166.500a9 9 0 0 0 18 0" fill="none" stroke="#000" stroke-width="1.200" shape-rendering="auto"/><path d="M1003 166.500a7 7 0 0 0 14 0" fill="none" stroke="#f0f" stroke-width="1.500" shape-rendering="auto"/><path d="M1005 166.500a5 5 0 0 0 10 0" fill="none" stroke="#0c0" stroke-width="1.500" shape-rendering="auto"/><path d="M1001.500 176.500l9.500-10" stroke="#000" shape-rendering="auto"/>
<text x="1002.5" y="200" font-size="13" fill="#000080" font-weight="bold" textLength="15.5" lengthAdjust="spacingAndGlyphs" shape-rendering="auto">DL</text>
<path d="M1001.500 217l7-6.500M1003 226.500l15.500-15.500M1014.500 227l4-4" stroke="#000" stroke-width="1.500" shape-rendering="auto"/><path d="M1002 218l10 9" stroke="#808080" stroke-width="1.300" shape-rendering="auto"/>
<text x="1000.5" y="247" font-size="15" fill="#000" font-weight="bold" textLength="5" lengthAdjust="spacingAndGlyphs" style="font-family:'Liberation Serif',serif" shape-rendering="auto">I</text><path d="M1005.500 241.500l10 8.500" stroke="#000" stroke-width="1.800" shape-rendering="auto"/><rect x="1008" y="242" width="11" height="1" fill="#f00" /><rect x="1011" y="246" width="8" height="1" fill="#00f" /><rect x="1014" y="249" width="5" height="1" fill="#008000" />
<rect x="1002" y="260" width="16" height="2" fill="#000" /><rect x="1002" y="265" width="16" height="2" fill="#000" /><rect x="1002" y="273" width="16" height="1" fill="#000" />
<rect x="1002" y="285" width="2" height="13" fill="#00f" />
<rect x="1006" y="285" width="2" height="13" fill="#00f" />
<rect x="1011" y="285" width="1" height="13" fill="#00f" />
<rect x="1016" y="285" width="1" height="13" fill="#00f" />
<rect x="1002" y="308" width="1" height="14" fill="#f00" />
<rect x="1007" y="308" width="1" height="14" fill="#f00" />
<rect x="1012" y="308" width="1" height="14" fill="#f00" />
<rect x="1017" y="308" width="1" height="14" fill="#f00" />
<rect x="1001" y="341" width="1" height="6" fill="#00f" /><rect x="1002" y="343" width="2" height="1" fill="#00f" />
<rect x="1004" y="338" width="1" height="6" fill="#00f" /><rect x="1005" y="340" width="2" height="1" fill="#00f" />
<rect x="1007" y="335" width="1" height="6" fill="#00f" /><rect x="1008" y="337" width="2" height="1" fill="#00f" />
<rect x="1009" y="333" width="1" height="6" fill="#00f" /><rect x="1010" y="335" width="2" height="1" fill="#00f" />
<rect x="1012" y="330" width="7" height="4" fill="#f00" /><rect x="1014" y="331" width="1" height="1" fill="#fff" /><rect x="1016" y="331" width="1" height="1" fill="#fff" /><rect x="1016" y="336" width="3" height="4" fill="#f00" /><rect x="1017" y="337" width="1" height="1" fill="#fff" />
<path d="M1005 360.500l7-6.500M1004 369.500l13.500-13M1013 368.500l5.500-5.500" stroke="#000" stroke-width="1.500" shape-rendering="auto"/>
<path d="M1003.500 392.500l8-12.500" stroke="#00f" stroke-width="1.800" shape-rendering="auto"/><path d="M1012 391.500l6-9.500" stroke="#000" stroke-width="1.500" shape-rendering="auto"/><rect x="1011" y="381" width="1" height="12" fill="#c00" opacity=".0"/>
<rect x="1011" y="381" width="1" height="1" fill="#c00" />
<rect x="1011" y="383" width="1" height="1" fill="#c00" />
<rect x="1011" y="385" width="1" height="1" fill="#c00" />
<rect x="1011" y="387" width="1" height="1" fill="#c00" />
<rect x="1011" y="389" width="1" height="1" fill="#c00" />
<rect x="1011" y="391" width="1" height="1" fill="#c00" />
<rect x="1004" y="392" width="1" height="1" fill="#c00" />
<rect x="1006" y="392" width="1" height="1" fill="#c00" />
<rect x="1008" y="392" width="1" height="1" fill="#c00" />
<rect x="1010" y="392" width="1" height="1" fill="#c00" />
<rect x="1001" y="404" width="18" height="1" fill="#00f" /><rect x="1001" y="408" width="18" height="1" fill="#f00" /><rect x="1001" y="412" width="18" height="1" fill="#00f" /><rect x="1001" y="416" width="18" height="1" fill="#f00" /><text x="1005" y="417.5" font-size="14.5" fill="#008000" font-weight="bold" textLength="10.5" lengthAdjust="spacingAndGlyphs" shape-rendering="auto">G</text>
<path d="M1003.500 441l5.500-13M1003.500 441l10-13M1003.500 441l13-13M1003.500 441l13.500-7.500M1003.500 441l13-3" stroke="#000" stroke-width="1.100" shape-rendering="auto"/><rect x="1003" y="440" width="2" height="2" fill="#000" />
<text x="1001.5" y="463.5" font-size="13" fill="#800080" textLength="7.5" lengthAdjust="spacingAndGlyphs" style="font-family:'Liberation Mono',monospace" shape-rendering="auto">G</text><text x="1010.5" y="463.5" font-size="13" fill="#008000" textLength="7.5" lengthAdjust="spacingAndGlyphs" style="font-family:'Liberation Mono',monospace" shape-rendering="auto">9</text>
<text x="1001.5" y="487.5" font-size="13" fill="#800080" textLength="16.5" lengthAdjust="spacingAndGlyphs" style="font-family:'Liberation Mono',monospace" shape-rendering="auto">GS</text>
<text x="1002.5" y="512" font-size="13" fill="#000" font-weight="bold" textLength="15.5" lengthAdjust="spacingAndGlyphs" shape-rendering="auto">LS</text>
<text x="1004.5" y="536" font-size="13" fill="#000" font-weight="bold" textLength="12" lengthAdjust="spacingAndGlyphs" shape-rendering="auto">Bi</text>
<path d="M1002 547v5l-3-2.500z" fill="#000" shape-rendering="auto"/>
</svg>
<svg width="1024" height="768" viewBox="0 0 1024 768" shape-rendering="crispEdges">
<rect x="29" y="100" width="1" height="638" fill="#000" /><rect x="29" y="737" width="966" height="1" fill="#000" /><rect x="994" y="716" width="1" height="22" fill="#000" />
<rect x="34" y="718" width="156" height="1" fill="#489088" /><rect x="34" y="718" width="1" height="17" fill="#489088" /><rect x="35" y="719" width="155" height="1" fill="#000" /><rect x="35" y="719" width="1" height="15" fill="#000" /><rect x="34" y="734" width="157" height="1" fill="#d0e4dc" /><rect x="190" y="718" width="1" height="17" fill="#d0e4dc" /><rect x="755" y="718" width="238" height="1" fill="#489088" /><rect x="755" y="718" width="1" height="17" fill="#489088" /><rect x="756" y="719" width="237" height="1" fill="#000" /><rect x="756" y="719" width="1" height="15" fill="#000" /><rect x="755" y="734" width="239" height="1" fill="#d0e4dc" /><rect x="993" y="718" width="1" height="17" fill="#d0e4dc" />
<rect x="0" y="739" width="1024" height="1" fill="#d0e4dc" />
<rect x="2" y="742" width="50" height="22" fill="#88c0b8" /><rect x="2" y="742" width="50" height="1" fill="#d0e4dc" /><rect x="2" y="742" width="1" height="22" fill="#d0e4dc" /><rect x="3" y="762" width="48" height="1" fill="#489088" /><rect x="50" y="743" width="1" height="20" fill="#489088" /><rect x="2" y="763" width="50" height="1" fill="#000" /><rect x="51" y="742" width="1" height="22" fill="#000" />
<g shape-rendering="auto"><path d="M6.500 746q3.500-2 6.500 0l-1.500 5.500q-3-2-6.500 0z" fill="#e8532e"/><path d="M13.800 746.500q3 2 6 -.500l-1.500 5.800q-3 2.300-6 0z" fill="#7cc42c"/><path d="M4.800 752.500q3.500-2 6.500 0l-1.500 5.500q-3-2-6.500 0z" fill="#3a7be8"/><path d="M12 753q3 2 6 0l-1.500 5.500q-3 2.300-6 0z" fill="#f5c81a"/></g>
<text x="23" y="757" font-size="12.5" fill="#000" font-weight="bold" textLength="26" lengthAdjust="spacingAndGlyphs" shape-rendering="auto">Start</text>
<rect x="59" y="744" width="1" height="20" fill="#d0e4dc" /><rect x="60" y="744" width="1" height="20" fill="#88c0b8" /><rect x="61" y="744" width="1" height="20" fill="#489088" />
<g transform="translate(68 745)" shape-rendering="auto"><rect x="1" y="1" width="13" height="14" rx="2" fill="#3a7be0"/><rect x="3" y="3" width="9" height="10" fill="#e8f0ff"/><path d="M5 10l5-5" stroke="#444" stroke-width="1.500"/><circle cx="14" cy="4" r="1.500" fill="#e04020"/><path d="M0 14h12" stroke="#f0d060" stroke-width="2"/></g>
<g transform="translate(92 745)" shape-rendering="auto"><rect x="1" y="4" width="14" height="10" fill="#dfe6f5" stroke="#6080c0"/><path d="M3 2l6 3v6l-6-3z" fill="#3a7be0"/><path d="M6 13l7-5v5z" fill="#3a7be0"/><rect x="10" y="6" width="3" height="3" fill="#e04020"/></g>
<g transform="translate(115 745)" shape-rendering="auto"><path d="M1 3h6l2 2h6v9h-14z" fill="#f0c860" stroke="#b08820"/><circle cx="8" cy="8" r="3.500" fill="#d8ecf8" stroke="#8899aa"/><path d="M10.500 10.500l3.500 3.500" stroke="#886622" stroke-width="2"/></g>
<g transform="translate(138 745)" shape-rendering="auto"><g transform="rotate(20 8 8)"><rect x="1.500" y="1.500" width="13" height="13" fill="#333"/><circle cx="8" cy="8" r="5" fill="#ddd"/><path d="M8 8V3A5 5 0 0 1 12.300 5.500z" fill="#ff0"/><path d="M8 8L12.300 5.500A5 5 0 0 1 12.300 10.500z" fill="#f00"/><path d="M8 8L12.300 10.500A5 5 0 0 1 8 13z" fill="#f0f"/><path d="M8 8V13A5 5 0 0 1 3.700 10.500z" fill="#00f"/><path d="M8 8L3.700 10.500A5 5 0 0 1 3.700 5.500z" fill="#0cc"/><path d="M8 8L3.700 5.500A5 5 0 0 1 8 3z" fill="#0c0"/></g></g>
<g transform="translate(160 745)" shape-rendering="auto"><path d="M1 5q4 3 7 2l-1-5l2-1l1 5q4-1 7-3q-3 6-8 7l-3 6h-2l2-6q-4-2-5-7z" fill="#0000e0"/></g>
<g transform="translate(184 745)" shape-rendering="auto"><g transform="rotate(-35 8 8)"><rect x="0" y="3" width="16" height="10" fill="#333"/><rect x="1.500" y="4.500" width="13" height="7" fill="#f0f0e0"/><path d="M1 8h14" stroke="#f0a020" stroke-width="3"/></g></g>
<g transform="translate(208 745)" shape-rendering="auto"><circle cx="8" cy="8" r="7" fill="#2a9a4a"/><circle cx="8" cy="8" r="4.200" fill="#8aa8f0"/><path d="M3 5a6 6 0 0 1 9-2M13 11a6 6 0 0 1-9 2" stroke="#b8f0c0" stroke-width="1.800" fill="none"/><path d="M6 6l4 4" stroke="#fff" stroke-width="1.500"/></g>
<g transform="translate(230 745)" shape-rendering="auto"><ellipse cx="8" cy="10" rx="5" ry="3.500" fill="#111"/><path d="M2 7l3 3M14 7l-3 3M2 14l3-3M14 14l-3-3M5 13l-1 3M11 13l1 3" stroke="#111" stroke-width="1.200"/><text x="1" y="8" font-size="9" font-weight="bold" fill="#e00000" style="font-family:'Liberation Serif',serif">MS</text></g>
<g transform="translate(254 745)" shape-rendering="auto"><rect x="4" y="1" width="8" height="9" rx="2" fill="#222"/><rect x="5.500" y="2.500" width="5" height="5" fill="#e8e040"/><rect x="1" y="10" width="13" height="4" fill="#223"/><rect x="2" y="12" width="11" height="2" fill="#5060c0"/><path d="M14 10v4" stroke="#888"/></g>
<g shape-rendering="crispEdges"><rect x="277" y="746" width="15" height="15" fill="#fff" /><path d="M276.500 745.500h16v16h-16z" fill="none" stroke="#333"/></g><text x="279" y="755" font-size="9.5" fill="#000" font-weight="bold" textLength="11" lengthAdjust="spacingAndGlyphs" shape-rendering="auto">FT</text><text x="283" y="760.5" font-size="8" fill="#0000ff" font-weight="bold" textLength="5" lengthAdjust="spacingAndGlyphs" shape-rendering="auto">4</text>
<g transform="translate(300 745)" shape-rendering="auto"><path d="M1 2h9l-1 12h-7z" fill="#cfe0f0" stroke="#8aa0c0"/><rect x="2" y="7" width="3" height="3" fill="#e04020"/><rect x="2" y="10" width="3" height="3" fill="#30a030"/><circle cx="11" cy="10" r="4.500" fill="#d8d0f0" stroke="#9088c0"/><circle cx="11" cy="10" r="1.200" fill="#fff"/><path d="M1 2h9" stroke="#60a0e0" stroke-width="2"/></g>
<g transform="translate(322 745)" shape-rendering="auto"><path d="M3 2l10 1l-1 12l-10-1z" fill="#4a9ae0"/><path d="M3 2l10 1" stroke="#e8c040" stroke-width="2" stroke-dasharray="1.500 1"/><path d="M13 3l1.500 10l-2.500 2z" fill="#b0c8e0"/></g>
<g transform="translate(345 745)" shape-rendering="auto"><rect x="0" y="0" width="16" height="16" fill="#000"/><ellipse cx="8" cy="8" rx="5.500" ry="4.500" fill="#a0c0f0"/><path d="M1 12l5-4l3 2l6-5" stroke="#2030e0" stroke-width="1.500" fill="none"/></g>
<g transform="translate(367 745)" shape-rendering="auto"><path d="M2 3h12l-1.500 12h-9z" fill="#e8eef0" stroke="#a0b0b8"/><path d="M6 8a3 3 0 0 1 5 0M10 11a3 3 0 0 1-5 0" stroke="#30a040" stroke-width="1.500" fill="none"/><path d="M2 3h12" stroke="#c0ccd0" stroke-width="2"/></g>
<g transform="translate(391 745)" shape-rendering="auto"><circle cx="8" cy="8" r="7" fill="#3060c0"/><path d="M2 5q2-5 9-3q4 2 4 7q-1 6-8 6q-6-1-6-7q3 4 7 2q3-3-1-5q-3 0-5 0z" fill="#f08020"/><path d="M4 3q3-2 6 0" stroke="#f8c040" stroke-width="1.500" fill="none"/></g>
<g transform="translate(414 745)" shape-rendering="auto"><circle cx="8" cy="8" r="7.500" fill="#d0d8e8" stroke="#8090a8"/><path d="M1 8a7 7 0 0 1 7-7" stroke="#f08020" stroke-width="2" fill="none"/><path d="M15 8a7 7 0 0 1-7 7" stroke="#30a040" stroke-width="2" fill="none"/><circle cx="8" cy="8" r="4.500" fill="#2050c0"/><path d="M6.500 5.500v5l4-2.500z" fill="#fff"/></g>
<g transform="translate(438 745)" shape-rendering="auto"><text x="2" y="14" font-size="17" font-weight="bold" fill="#3a8ae8" style="font-family:'Liberation Sans',sans-serif">e</text><path d="M1 11q-2 4 3 2q6-3 10-9q0-3-4-1" stroke="#f0b020" stroke-width="1.500" fill="none"/></g>
<rect x="465" y="744" width="1" height="20" fill="#d0e4dc" /><rect x="466" y="744" width="1" height="20" fill="#88c0b8" /><rect x="467" y="744" width="1" height="20" fill="#489088" />
<defs><pattern id="chk" width="2" height="2" patternUnits="userSpaceOnUse"><rect width="2" height="2" fill="#88c0b8"/><rect width="1" height="1" fill="#d0e4dc"/><rect x="1" y="1" width="1" height="1" fill="#d0e4dc"/></pattern></defs>
<rect x="472" y="742" width="160" height="22" fill="url(#chk)" /><rect x="472" y="742" width="160" height="1" fill="#1c3f3a" /><rect x="472" y="742" width="1" height="22" fill="#1c3f3a" /><rect x="473" y="743" width="158" height="1" fill="#489088" /><rect x="473" y="743" width="1" height="20" fill="#489088" /><rect x="472" y="763" width="160" height="1" fill="#d0e4dc" /><rect x="631" y="742" width="1" height="22" fill="#d0e4dc" />
<rect x="478" y="746" width="15" height="15" fill="#fff" /><path d="M477.500 745.500h16v16h-16z" fill="none" stroke="#333"/><text x="480" y="755" font-size="9.5" fill="#000" font-weight="bold" textLength="11" lengthAdjust="spacingAndGlyphs" shape-rendering="auto">FT</text><text x="484" y="760.5" font-size="8" fill="#0000ff" font-weight="bold" textLength="5" lengthAdjust="spacingAndGlyphs" shape-rendering="auto">4</text>
<text x="498" y="758" font-size="12.5" fill="#000" font-weight="bold" textLength="129.5" lengthAdjust="spacingAndGlyphs" shape-rendering="auto">Fibonacci/Galactic T...</text>
<rect x="844" y="744" width="1" height="20" fill="#d0e4dc" /><rect x="845" y="744" width="1" height="20" fill="#88c0b8" /><rect x="846" y="744" width="1" height="20" fill="#489088" />
<rect x="855" y="746" width="16" height="16" fill="#000080" /><text x="856.5" y="758.5" font-size="12" fill="#fff" textLength="13" lengthAdjust="spacingAndGlyphs" shape-rendering="auto">PL</text>
<rect x="875" y="743" width="1" height="22" fill="#489088" /><rect x="876" y="743" width="1" height="22" fill="#d0e4dc" />
<rect x="883.500" y="751.500" width="15" height="9" rx="1.500" fill="#fff" stroke="#000" shape-rendering="auto"/><rect x="885" y="753" width="1" height="1" fill="#000" /><rect x="886" y="755" width="1" height="1" fill="#000" /><rect x="887" y="753" width="1" height="1" fill="#000" /><rect x="888" y="755" width="1" height="1" fill="#000" /><rect x="889" y="753" width="1" height="1" fill="#000" /><rect x="890" y="755" width="1" height="1" fill="#000" /><rect x="891" y="753" width="1" height="1" fill="#000" /><rect x="892" y="755" width="1" height="1" fill="#000" /><rect x="893" y="753" width="1" height="1" fill="#000" /><rect x="894" y="755" width="1" height="1" fill="#000" /><rect x="895" y="753" width="1" height="1" fill="#000" /><rect x="896" y="755" width="1" height="1" fill="#000" /><rect x="886" y="758" width="10" height="1" fill="#000" /><path d="M887 751q1-3 3-2t3 0t4-1" stroke="#000" fill="none" shape-rendering="auto"/>
<rect x="903" y="743" width="1" height="22" fill="#489088" /><rect x="904" y="743" width="1" height="22" fill="#d0e4dc" />
<rect x="910" y="742" width="112" height="1" fill="#489088" /><rect x="910" y="742" width="1" height="24" fill="#489088" /><rect x="910" y="765" width="112" height="1" fill="#d0e4dc" /><rect x="1021" y="742" width="1" height="24" fill="#d0e4dc" />
<text x="914.5" y="758.5" font-size="13" fill="#000" font-weight="bold" textLength="9" lengthAdjust="spacingAndGlyphs" shape-rendering="auto">«</text>
<g shape-rendering="auto"><rect x="929" y="749" width="8" height="7" fill="#3050c0"/><rect x="930" y="750" width="6" height="5" fill="#70a0f0"/><rect x="931" y="757" width="4" height="2" fill="#888"/><rect x="929" y="759" width="8" height="2" fill="#ccc"/><path d="M938.500 750q2 2 0 5M940.500 748.500q3 3.500 0 7.500M942.500 747q4 5 0 10" stroke="#556" fill="none"/></g>
<g shape-rendering="auto"><path d="M947 751l4-3v11l-4-3z" fill="#666"/><ellipse cx="953" cy="753.500" rx="4" ry="6" fill="#aaa" stroke="#555"/><ellipse cx="953" cy="753.500" rx="2" ry="3.500" fill="#333"/><path d="M953 761l7-6M956 762l5-4" stroke="#7080e0" stroke-width="1.200"/></g>
<g shape-rendering="auto"><circle cx="971.500" cy="753.500" r="5" fill="#fff" stroke="#e00000" stroke-width="1.500"/><path d="M971.500 745v2M971.500 760v2M963 753.500h2M978 753.500h2M965.500 747.500l1.500 1.500M977.500 747.500l-1.500 1.500M965.500 759.500l1.500-1.500M977.500 759.500l-1.500-1.500" stroke="#e00000" stroke-width="2"/><circle cx="969.500" cy="752" r=".800" fill="#000"/><circle cx="973.500" cy="752" r=".800" fill="#000"/><path d="M969 755q2.500 2 5 0" stroke="#000" fill="none"/></g>
<text x="987.5" y="758" font-size="11.5" fill="#000" textLength="27" lengthAdjust="spacingAndGlyphs" shape-rendering="auto">08:33</text>
</svg>
<svg class="abs" style="left:29px;top:100px" width="966" height="616" viewBox="29 100 966 616" shape-rendering="crispEdges" font-family="Liberation Sans, sans-serif" font-size="10.67">
<rect x="29" y="100" width="966" height="616" fill="#000"/>
<line x1="43.5" y1="103" x2="43.5" y2="701" stroke="#868686" stroke-dasharray="3 3" stroke-dashoffset="2"/>
<line x1="130.5" y1="103" x2="130.5" y2="701" stroke="#868686" stroke-dasharray="3 3" stroke-dashoffset="2"/>
<line x1="208.5" y1="103" x2="208.5" y2="701" stroke="#868686" stroke-dasharray="3 3" stroke-dashoffset="2"/>
<line x1="295.5" y1="103" x2="295.5" y2="701" stroke="#868686" stroke-dasharray="3 3" stroke-dashoffset="2"/>
<line x1="382.5" y1="103" x2="382.5" y2="701" stroke="#868686" stroke-dasharray="3 3" stroke-dashoffset="2"/>
<line x1="469.5" y1="103" x2="469.5" y2="701" stroke="#868686" stroke-dasharray="3 3" stroke-dashoffset="2"/>
<line x1="556.5" y1="103" x2="556.5" y2="701" stroke="#868686" stroke-dasharray="3 3" stroke-dashoffset="2"/>
<line x1="646.5" y1="103" x2="646.5" y2="701" stroke="#868686" stroke-dasharray="3 3" stroke-dashoffset="2"/>
<line x1="733.5" y1="103" x2="733.5" y2="701" stroke="#868686" stroke-dasharray="3 3" stroke-dashoffset="2"/>
<line x1="820.5" y1="103" x2="820.5" y2="701" stroke="#868686" stroke-dasharray="3 3" stroke-dashoffset="2"/>
<line x1="910.5" y1="103" x2="910.5" y2="701" stroke="#868686" stroke-dasharray="3 3" stroke-dashoffset="2"/>
<line x1="33" y1="162.5" x2="933" y2="162.5" stroke="#868686" stroke-dasharray="2 8"/>
<line x1="33" y1="228.5" x2="933" y2="228.5" stroke="#868686" stroke-dasharray="2 8"/>
<line x1="33" y1="295.5" x2="933" y2="295.5" stroke="#868686" stroke-dasharray="2 8"/>
<line x1="33" y1="362.5" x2="933" y2="362.5" stroke="#868686" stroke-dasharray="2 8"/>
<line x1="33" y1="429.5" x2="933" y2="429.5" stroke="#868686" stroke-dasharray="2 8"/>
<line x1="33" y1="496.5" x2="933" y2="496.5" stroke="#868686" stroke-dasharray="2 8"/>
<line x1="33" y1="562.5" x2="933" y2="562.5" stroke="#868686" stroke-dasharray="2 8"/>
<line x1="33" y1="629.5" x2="933" y2="629.5" stroke="#868686" stroke-dasharray="2 8"/>
<line x1="33" y1="696.5" x2="933" y2="696.5" stroke="#868686" stroke-dasharray="2 8"/>
<path d="M33 138H236M236 139H490M490 138H603M603 137H707M707 136H934M33 198H216M216 199H508M508 198H616M616 197H721M721 196H934M33 258H195M195 259H523M523 258H628M628 257H733M733 256H934M33 318H177M177 319H535M535 318H640M640 317H751M751 316H934M33 379H44M44 378H150M150 379H548M548 378H649M649 377H767M767 376H934M33 439H65M65 438H126M126 439H327M327 440H430M430 439H560M560 438H662M662 437H784M784 436H934M33 499H279M279 500H448M448 499H573M573 498H675M675 497H811M811 496H934M33 559H255M255 560H466M466 559H586M586 558H689M689 557H838M838 556H909M909 557H934M33 619H241M241 620H484M484 619H599M599 618H703M703 617H934M33 679H223M223 680H502M502 679H611M611 678H716M716 677H934" stroke="#00ffff" stroke-width="2" fill="none"/>
<path d="M33.5 531V547M34 537.5h2M36.5 531V546M37 533.5h2M39.5 532V547M40 546.5h2M42.5 542V550M43 547.5h2M45.5 536V548M46 541.5h2M48.5 525V548M49 527.5h2M51.5 515V529M52 521.5h2M54.5 509V523M55 513.5h2M57.5 506V517M58 506.5h2M60.5 504V513M61 511.5h2M63.5 507V514M64 510.5h2M66.5 503V513M67 509.5h2M69.5 509V520M70 517.5h2M72.5 517V544M73 543.5h2M75.5 538V551M76 541.5h2M78.5 523V541M79 526.5h2M81.5 517V536M82 526.5h2M84.5 522V548M85 531.5h2M87.5 512V531M88 516.5h2M90.5 507V516M91 507.5h2M93.5 507V514M94 512.5h2M96.5 503V519M97 517.5h2M99.5 508V523M100 512.5h2M102.5 504V514M103 509.5h2M105.5 508V521M106 511.5h2M108.5 502V513M109 510.5h2M111.5 491V512M112 494.5h2M114.5 482V494M115 489.5h2M117.5 481V492M118 490.5h2M120.5 481V497M121 485.5h2M123.5 480V486M124 485.5h2M126.5 483V497M127 493.5h2M129.5 493V507M130 506.5h2M132.5 494V507M133 495.5h2M135.5 477V496M136 478.5h2M138.5 475V484M139 480.5h2M141.5 476V488M142 486.5h2M144.5 466V496M145 484.5h2M147.5 478V496M148 483.5h2M150.5 483V502M151 497.5h2M153.5 489V507M154 492.5h2M156.5 485V502M157 494.5h2M159.5 488V504M160 489.5h2M162.5 472V490M163 477.5h2M165.5 470V482M166 471.5h2M168.5 466V473M169 468.5h2M171.5 461V471M172 467.5h2M174.5 461V472M175 469.5h2M177.5 465V476M178 469.5h2M180.5 468V488M181 484.5h2M183.5 471V485M184 474.5h2M186.5 459V474M187 459.5h2M189.5 459V482M190 479.5h2M192.5 473V491M193 482.5h2M195.5 473V482M196 481.5h2M198.5 473V487M199 477.5h2M201.5 454V479M202 460.5h2M204.5 449V460M205 449.5h2M207.5 449V457M208 454.5h2M210.5 450V458M211 453.5h2M213.5 450V458M214 452.5h2M216.5 446V458M217 452.5h2M219.5 452V467M220 457.5h2M222.5 451V472M223 466.5h2M225.5 462V474M226 472.5h2M228.5 453V473M229 455.5h2M231.5 437V456M232 440.5h2M234.5 433V442M235 436.5h2M237.5 435V438M238 435.5h2M240.5 430V446M241 433.5h2M243.5 433V445M244 440.5h2M246.5 436V455M247 449.5h2M249.5 449V459M250 455.5h2M252.5 447V462M253 458.5h2M255.5 458V549M256 527.5h2M258.5 504V532M259 519.5h2M261.5 515V553M262 523.5h2M264.5 522V545M265 544.5h2M267.5 532V557M268 555.5h2M270.5 526V556M271 528.5h2M273.5 520V534M274 531.5h2M276.5 513V532M277 519.5h2M279.5 508V524M280 517.5h2M282.5 505V522M283 511.5h2M285.5 512V552M286 551.5h2M288.5 541V573M289 541.5h2M291.5 533V545M292 537.5h2M294.5 533V550M295 545.5h2M297.5 524V546M298 526.5h2M300.5 514V528M301 514.5h2M303.5 483V519M304 489.5h2M306.5 485V495M307 485.5h2M309.5 478V488M310 483.5h2M312.5 482V502M313 485.5h2M315.5 485V499M316 498.5h2M318.5 497V520M319 512.5h2M321.5 500V519M322 505.5h2M324.5 494V523M325 504.5h2M327.5 497V509M328 499.5h2M330.5 474V499M331 479.5h2M333.5 473V481M334 475.5h2M336.5 468V480M337 469.5h2M339.5 464V471M340 468.5h2M342.5 466V472M343 467.5h2M345.5 467V487M346 482.5h2M348.5 471V492M349 471.5h2M351.5 461V475M352 461.5h2M354.5 441V462M355 443.5h2M357.5 431V444M358 435.5h2M360.5 423V441M361 430.5h2M363.5 425V440M364 428.5h2M366.5 402V429M367 402.5h2M369.5 399V411M370 410.5h2M372.5 398V413M373 405.5h2M375.5 380V406M376 381.5h2M378.5 374V385M379 377.5h2M381.5 371V386M382 376.5h2M384.5 369V387M385 386.5h2M387.5 373V389M388 374.5h2M390.5 354V375M391 361.5h2M393.5 355V364M394 357.5h2M396.5 349V358M397 352.5h2M399.5 343V353M400 345.5h2M402.5 344V357M403 345.5h2M405.5 335V350M406 336.5h2M408.5 336V361M409 360.5h2M411.5 341V362M412 342.5h2M414.5 332V347M415 338.5h2M417.5 316V340M418 332.5h2M420.5 315V336M421 315.5h2M423.5 310V322M424 317.5h2M426.5 303V318M427 303.5h2M429.5 299V308M430 306.5h2M432.5 298V308M433 306.5h2M435.5 295V312M436 309.5h2M438.5 292V326M439 323.5h2M441.5 310V324M442 312.5h2M444.5 302V318M445 309.5h2M447.5 290V318M448 291.5h2M450.5 284V294M451 292.5h2M453.5 281V292M454 285.5h2M456.5 281V293M457 283.5h2M459.5 284V304M460 297.5h2M462.5 298V323M463 318.5h2M465.5 316V353M466 352.5h2M468.5 323V354M469 325.5h2M471.5 317V333M472 325.5h2M474.5 321V348M475 347.5h2M477.5 315V349M478 316.5h2M480.5 299V317M481 303.5h2M483.5 281V304M484 290.5h2M486.5 285V295M487 294.5h2M489.5 287V300M490 290.5h2M492.5 284V316M493 315.5h2M495.5 302V330M496 305.5h2M498.5 305V337M499 336.5h2M501.5 315V346M502 338.5h2M504.5 321V345M505 340.5h2M507.5 324V353M508 325.5h2M510.5 313V331M511 326.5h2M513.5 309V344M514 328.5h2M516.5 307V329M517 308.5h2M519.5 298V309M520 301.5h2M522.5 300V311M523 302.5h2M525.5 291V307M526 294.5h2M528.5 284V294M529 288.5h2M531.5 289V314M532 313.5h2M534.5 298V318M535 300.5h2M537.5 251V300M538 253.5h2M540.5 241V255M541 245.5h2M543.5 231V246M544 237.5h2M546.5 226V239M547 236.5h2M549.5 235V256M550 243.5h2M552.5 228V243M553 228.5h2M555.5 228V262M556 254.5h2M558.5 234V255M559 239.5h2M561.5 239V278M562 276.5h2M564.5 259V283M565 266.5h2M567.5 266V340M568 339.5h2M570.5 309V353M571 352.5h2M573.5 330V360M574 337.5h2M576.5 313V363M577 360.5h2M579.5 331V374M580 337.5h2M582.5 312V338M583 319.5h2M585.5 320V367M586 366.5h2M588.5 319V370M589 326.5h2M591.5 296V338M592 312.5h2M594.5 280V315M595 287.5h2M597.5 288V352M598 351.5h2M600.5 345V387M601 357.5h2M603.5 340V360M604 357.5h2M606.5 351V393M607 392.5h2M609.5 379V423M610 420.5h2M612.5 415V477M613 422.5h2M615.5 368V422M616 383.5h2M618.5 366V399M619 376.5h2M621.5 367V388M622 382.5h2M624.5 355V382M625 357.5h2M627.5 347V368M628 357.5h2M630.5 333V361M631 333.5h2M633.5 332V344M634 343.5h2M636.5 344V390M637 389.5h2M639.5 347V390M640 348.5h2M642.5 344V366M643 356.5h2M645.5 325V357M646 337.5h2M648.5 314V343M649 322.5h2M651.5 322V354M652 345.5h2M654.5 330V350M655 336.5h2M657.5 336V383M658 375.5h2M660.5 362V393M661 375.5h2M663.5 342V376M664 347.5h2M666.5 336V352M667 348.5h2M669.5 318V349M670 325.5h2M672.5 320V342M673 323.5h2M675.5 321V336M676 329.5h2M678.5 273V330M679 273.5h2M681.5 252V273M682 259.5h2M684.5 259V273M685 268.5h2M687.5 250V270M688 258.5h2M690.5 250V271M691 269.5h2M693.5 265V280M694 266.5h2M696.5 243V267M697 249.5h2M699.5 243V251M700 244.5h2M702.5 242V254M703 247.5h2M705.5 210V248M706 215.5h2M708.5 211V227M709 222.5h2M711.5 223V238M712 235.5h2M714.5 228V237M715 235.5h2M717.5 209V236M718 218.5h2M720.5 219V228M721 222.5h2M723.5 201V223M724 201.5h2M726.5 202V228M727 216.5h2M729.5 197V238M730 227.5h2M732.5 212V228M733 215.5h2M735.5 210V245M736 231.5h2M738.5 231V250M739 243.5h2M741.5 227V267M742 247.5h2M744.5 244V259M745 248.5h2M747.5 248V310M748 309.5h2M750.5 298V324M751 301.5h2M753.5 282V306M754 283.5h2M756.5 281V318M757 284.5h2M759.5 273V305M760 283.5h2M762.5 261V284M763 262.5h2M765.5 246V263M766 251.5h2M768.5 251V266M769 264.5h2M771.5 236V268M772 242.5h2M774.5 243V304M775 302.5h2M777.5 291V322M778 296.5h2M780.5 293V321M781 306.5h2M783.5 286V311M784 288.5h2M786.5 288V348M787 345.5h2M789.5 338V383M790 353.5h2M792.5 353V392M793 389.5h2M795.5 363V402M796 400.5h2M798.5 343V402M799 344.5h2M801.5 335V362M802 357.5h2M804.5 353V386M805 377.5h2M807.5 361V388M808 367.5h2M810.5 367V406M811 402.5h2M813.5 378V423M814 395.5h2M816.5 395V431M817 430.5h2M819.5 400V431M820 400.5h2M822.5 390V441M823 439.5h2M825.5 398V439M826 402.5h2M828.5 364V439M829 367.5h2M831.5 339V361M832 344.5h2M834.5 319V344M835 324.5h2" stroke="#ffff00" fill="none"/>
<path d="M33.5 102.5H933.5V697.5H33.5Z" stroke="#fff" fill="none"/>
<rect x="924" y="103" width="9" height="7" fill="#00ff00"/>
<rect x="924" y="110" width="9" height="34" fill="#008000"/>
<rect x="925" y="111" width="7" height="6" fill="#fff"/><rect x="925" y="119" width="7" height="11" fill="#fff"/><rect x="925" y="132" width="7" height="11" fill="#fff"/>
<path d="M925.5 111.5l6 5M931.5 111.5l-6 5" stroke="#000" fill="none" shape-rendering="auto"/>
<path d="M928.5 121V129M926 123.5l2.5-2.5l2.5 2.5" stroke="#000" fill="none" shape-rendering="auto"/>
<path d="M928.5 133V142M926.5 135l2-2l2 2M926 139.5l2.5 2.5l2.5-2.5" stroke="#000" fill="none" shape-rendering="auto"/>
<rect x="924" y="135" width="9" height="2" fill="#00ffff"/><rect x="32" y="546" width="1" height="1" fill="#ffff00"/>
<rect x="924" y="393" width="9" height="13" fill="#008000"/><rect x="925" y="394" width="7" height="11" fill="#fff"/><circle cx="928.5" cy="399.5" r="2.8" stroke="#000" fill="none" shape-rendering="auto"/>
<rect x="924" y="663" width="9" height="26" fill="#008000"/><rect x="925" y="664" width="7" height="11" fill="#fff"/><rect x="925" y="678" width="7" height="10" fill="#fff"/><rect x="924" y="689" width="9" height="8" fill="#00ff00"/>
<path d="M928.5 665V674M926 667l5 5M931 667l-5 5" stroke="#000" fill="none" shape-rendering="auto"/>
<path d="M928.5 679V687M926 684.5l2.5 2.5l2.5-2.5" stroke="#000" fill="none" shape-rendering="auto"/>
<rect x="924" y="676" width="9" height="2" fill="#00ffff"/>
<rect x="836" y="695" width="4" height="5" fill="#ffff00"/>
<rect x="935" y="163" width="4" height="1" fill="#c0c0c0"/>
<text x="945" y="166" fill="#fff" stroke="#fff" stroke-width=".22" textLength="44.4" shape-rendering="auto">14400.00</text>
<rect x="935" y="229" width="4" height="1" fill="#c0c0c0"/>
<text x="945" y="232" fill="#fff" stroke="#fff" stroke-width=".22" textLength="44.4" shape-rendering="auto">14000.00</text>
<rect x="935" y="296" width="4" height="1" fill="#c0c0c0"/>
<text x="945" y="299" fill="#fff" stroke="#fff" stroke-width=".22" textLength="44.4" shape-rendering="auto">13600.00</text>
<rect x="935" y="363" width="4" height="1" fill="#c0c0c0"/>
<text x="945" y="366" fill="#fff" stroke="#fff" stroke-width=".22" textLength="44.4" shape-rendering="auto">13200.00</text>
<rect x="935" y="430" width="4" height="1" fill="#c0c0c0"/>
<text x="945" y="433" fill="#fff" stroke="#fff" stroke-width=".22" textLength="44.4" shape-rendering="auto">12800.00</text>
<rect x="935" y="497" width="4" height="1" fill="#c0c0c0"/>
<text x="945" y="500" fill="#fff" stroke="#fff" stroke-width=".22" textLength="44.4" shape-rendering="auto">12400.00</text>
<rect x="935" y="563" width="4" height="1" fill="#c0c0c0"/>
<text x="945" y="566" fill="#fff" stroke="#fff" stroke-width=".22" textLength="44.4" shape-rendering="auto">12000.00</text>
<rect x="935" y="630" width="4" height="1" fill="#c0c0c0"/>
<text x="945" y="633" fill="#fff" stroke="#fff" stroke-width=".22" textLength="44.4" shape-rendering="auto">11600.00</text>
<rect x="935" y="697" width="4" height="1" fill="#c0c0c0"/>
<text x="945" y="700" fill="#fff" stroke="#fff" stroke-width=".22" textLength="44.4" shape-rendering="auto">11200.00</text>
<rect x="935" y="317" width="60" height="13" fill="#c9e2da"/><text x="943.5" y="327" fill="#000" stroke="#000" stroke-width=".22" textLength="44.4">13431.46</text>
<text x="44" y="711" fill="#fff" stroke="#fff" stroke-width=".22" textLength="55">2006-11-13</text>
<text x="131" y="711" fill="#fff" stroke="#fff" stroke-width=".22" textLength="55">2006-12-26</text>
<text x="209" y="711" fill="#fff" stroke="#fff" stroke-width=".22" textLength="55">2007-02-05</text>
<text x="296" y="711" fill="#fff" stroke="#fff" stroke-width=".22" textLength="55">2007-03-19</text>
<text x="383" y="711" fill="#fff" stroke="#fff" stroke-width=".22" textLength="55">2007-04-30</text>
<text x="470" y="711" fill="#fff" stroke="#fff" stroke-width=".22" textLength="55">2007-06-11</text>
<text x="557" y="711" fill="#fff" stroke="#fff" stroke-width=".22" textLength="55">2007-07-23</text>
<text x="647" y="711" fill="#fff" stroke="#fff" stroke-width=".22" textLength="55">2007-09-04</text>
<text x="734" y="711" fill="#fff" stroke="#fff" stroke-width=".22" textLength="55">2007-10-15</text>
<text x="821" y="711" fill="#fff" stroke="#fff" stroke-width=".22" textLength="55">2007-11-26</text>
<text x="911" y="711" fill="#fff" stroke="#fff" stroke-width=".22" textLength="23.5">2008</text>
<text x="34" y="114" fill="#fff" stroke="#fff" stroke-width=".22" font-size="9.33" textLength="154">FIBONACCI/GALACTIC TRADER(R)</text>
<text x="42.5" y="133" fill="#00ff00" stroke="#00ff00" stroke-width=".22" textLength="154.5">[010] Pluto Price Line G 360 N -2</text>
<text x="42.5" y="143" fill="#00ffff" stroke="#00ffff" stroke-width=".22" textLength="163">[007] Saturn Price Line G 360 N -2</text>
<text x="42.5" y="153" fill="#ff0000" stroke="#ff0000" stroke-width=".22" textLength="155.5">[005] Mars Price Line G 360 N -2</text>
<rect x="979" y="701" width="14" height="13" fill="#c0c0c0"/><text x="980.3" y="711" fill="#000" stroke="#000" stroke-width=".22" font-size="9.5" textLength="11" lengthAdjust="spacingAndGlyphs">TF</text>
</svg>
</body></html>
